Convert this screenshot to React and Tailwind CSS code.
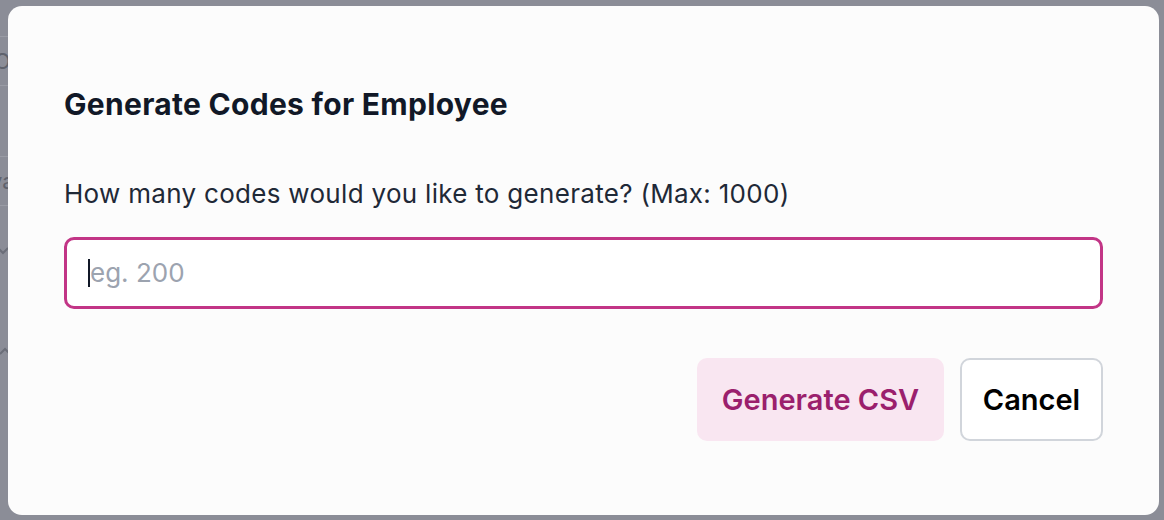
import React from "react";

const font = { fontFamily: 'Inter, "Noto Sans", Arial, sans-serif' };

function PageBehind() {
  // A sliver of the table page underneath the dialog
  return (
    <div className="flex flex-col w-[40px] text-[22px] text-[#5f626c] overflow-hidden">
      <div className="h-[37px] border-b border-[#9a9ca5]" />
      <div className="h-[49px] border-b border-[#9a9ca5] flex items-center">
        <span className="-ml-[6px] leading-none">Op</span>
      </div>
      <div className="h-[71px] border-b border-[#9a9ca5]" />
      <div className="h-[49px] border-b border-[#9a9ca5] flex items-center">
        <span className="-ml-[10px] leading-none">va</span>
      </div>
      <div className="h-[90px] flex items-center">
        <svg width="14" height="14" viewBox="0 0 14 14" className="-ml-[4px]">
          <path d="M2 4 L7 9 L12 4" stroke="#6b6e78" strokeWidth="2" fill="none" />
        </svg>
      </div>
      <div className="h-[110px] flex items-center">
        <svg width="14" height="14" viewBox="0 0 14 14" className="-ml-[2px]">
          <path d="M2 10 L7 5 L12 10" stroke="#6b6e78" strokeWidth="2" fill="none" />
        </svg>
      </div>
    </div>
  );
}

export default function App() {
  return (
    <div className="relative w-[1164px] h-[520px] overflow-hidden bg-[#8b8d97]" style={font}>
      <PageBehind />
      <div className="absolute left-[8px] top-[6px] w-[1151px] h-[509px] rounded-[14px] bg-[#fcfcfc] px-[56px] pt-[80px]">
        <h2 className="text-[30px] leading-[36px] font-bold tracking-[0.3px] text-[#111827]">
          Generate Codes for Employee
        </h2>
        <p className="mt-[56px] text-[26px] leading-[32px] tracking-[0.3px] text-[#1f2937]">
          How many codes would you like to generate? (Max: 1000)
        </p>
        <div className="mt-[27px] h-[72px] rounded-[10px] border-[3px] border-[#c23586] bg-white flex items-center pl-[21px]">
          <span className="w-[2px] h-[28px] bg-[#111827]" />
          <span className="text-[26px] text-[#9ca3af] leading-none">eg. 200</span>
        </div>
        <div className="mt-[49px] flex justify-end gap-[16px]">
          <button className="h-[83px] w-[247px] rounded-[10px] bg-[#f9e6f1] text-[#9b1f6d] text-[29px] font-semibold">
            Generate CSV
          </button>
          <button className="h-[83px] w-[143px] rounded-[10px] border-2 border-[#d1d5db] bg-white text-black text-[29px] font-semibold">
            Cancel
          </button>
        </div>
      </div>
    </div>
  );
}
